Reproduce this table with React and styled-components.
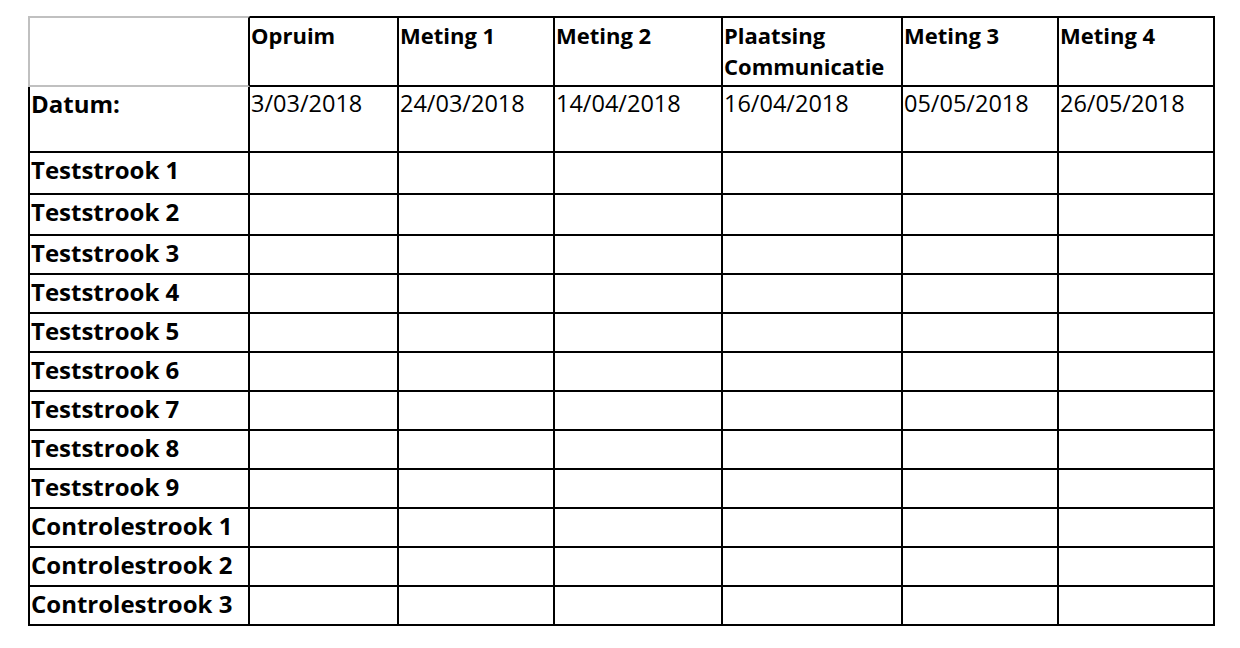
import styled, { createGlobalStyle, css } from 'styled-components'

const columns = [
  { title: 'Opruim', date: '3/03/2018' },
  { title: 'Meting 1', date: '24/03/2018' },
  { title: 'Meting 2', date: '14/04/2018' },
  { title: 'Plaatsing Communicatie', date: '16/04/2018' },
  { title: 'Meting 3', date: '05/05/2018' },
  { title: 'Meting 4', date: '26/05/2018' },
]

const strips = [
  'Teststrook 1', 'Teststrook 2', 'Teststrook 3', 'Teststrook 4',
  'Teststrook 5', 'Teststrook 6', 'Teststrook 7', 'Teststrook 8',
  'Teststrook 9', 'Controlestrook 1', 'Controlestrook 2', 'Controlestrook 3',
]

const GlobalStyle = createGlobalStyle`
  html, body {
    margin: 0;
    background: #fff;
  }
  body {
    font-family: "Open Sans", "Liberation Sans", sans-serif;
    color: #000;
  }
`

const Page = styled.div`
  width: 1240px;
  height: 648px;
  overflow: hidden;
  padding: 16px 0 0 28px;
  box-sizing: border-box;
`

const Sheet = styled.div`
  display: grid;
  grid-template-columns: 222px 149px 156px 168px 180px 156px 156px;
  grid-template-rows: 71px 66px 42px 41px repeat(10, 39px);
`

const Cell = styled.div`
  box-sizing: border-box;
  border-right: 2px solid #000;
  border-bottom: 2px solid #000;
  padding: 1px 0 0 1px;
  overflow: hidden;
  white-space: nowrap;

  ${p => p.$top && css`border-top: 2px solid #000;`}
  ${p => p.$left && css`border-left: 2px solid #000;`}
`

const Corner = styled(Cell)`
  border-top: 2px solid #c0c0c0;
  border-left: 2px solid #c0c0c0;
  border-bottom: 2px solid #c0c0c0;
  border-right: 2px solid #000;
`

const HeadCell = styled(Cell)`
  font-weight: 700;
  font-size: 22px;
  line-height: 31px;
  padding-top: 2px;
  white-space: normal;
`

const DateCell = styled(Cell)`
  font-size: 23.5px;
  line-height: 30px;
  padding-top: 1px;
`

const Label = styled(Cell)`
  font-weight: 700;
  font-size: 24px;
  line-height: 34px;
  padding-top: 0;
  padding-left: 1px;
`

const App = () => {
  return <Page>
    <GlobalStyle />
    <Sheet>
      <Corner />
      {columns.map(c => <HeadCell key={c.title} $top>{c.title}</HeadCell>)}

      <Label $left>Datum:</Label>
      {columns.map(c => <DateCell key={c.date}>{c.date}</DateCell>)}

      {strips.map(s => [
        <Label key={s} $left>{s}</Label>,
        ...columns.map(c => <Cell key={s + c.title} />),
      ])}
    </Sheet>
  </Page>
}

export default App
